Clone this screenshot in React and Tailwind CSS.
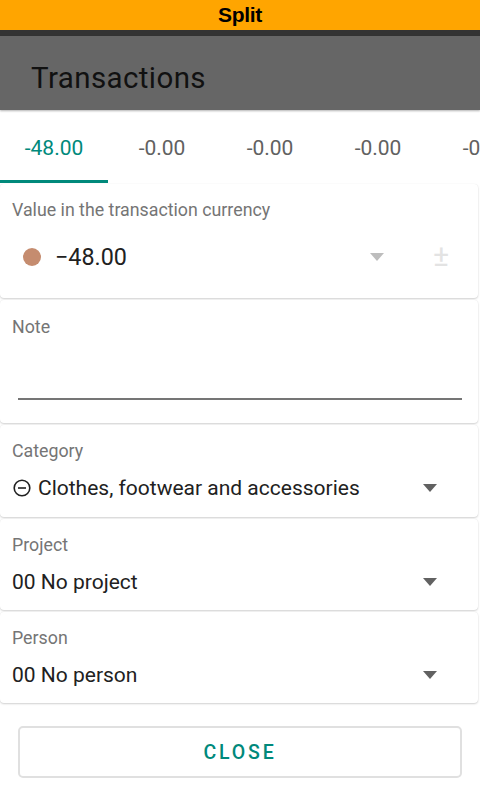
import React from "react";

const Arrow = ({ color = "#616161" }) => (
  <svg width="16" height="8" viewBox="0 0 16 8">
    <path d="M1 0 L15 0 L8 8 Z" fill={color} />
  </svg>
);

function Card({ children, className = "" }) {
  return (
    <div
      className={`bg-white rounded-[4px] shadow-[0_1px_2px_rgba(0,0,0,0.18),0_0_1px_rgba(0,0,0,0.08)] ${className}`}
    >
      {children}
    </div>
  );
}

function SelectCard({ label, value, icon, h }) {
  return (
    <Card className={`${h} px-[12px] pt-[16px]`}>
      <div className="text-[17.8px] leading-[20px] text-[#757575]">{label}</div>
      <div className="mt-[12px] flex items-center h-[30px]">
        {icon}
        <div className="text-[21px] leading-[30px] text-[#212121] flex-1">{value}</div>
        <div className="w-[16px] mr-[28px] flex items-center">
          <Arrow />
        </div>
      </div>
    </Card>
  );
}

export default function App() {
  const tabs = ["-48.00", "-0.00", "-0.00", "-0.00", "-0.00"];
  return (
    <div
      className="w-[480px] h-[800px] bg-white overflow-hidden"
      style={{ fontFamily: "Roboto, 'Noto Sans', sans-serif" }}
    >
      <div
        className="h-[30px] bg-[#ffa500] flex items-center justify-center text-[21px] font-bold text-black tracking-[-0.3px]"
        style={{ fontFamily: "'Liberation Sans', Arial, sans-serif" }}
      >
        Split
      </div>
      <div className="h-[6px] bg-[#333333]" />
      <div className="h-[74px] bg-[#666666] flex items-center pl-[31px] shadow-[0_1px_2px_rgba(0,0,0,0.3)] relative">
        <span className="text-[29.5px] text-[#111111] tracking-[0.4px] mt-[10px]">Transactions</span>
      </div>
      <div className="h-[73px] flex overflow-hidden">
        {tabs.map((t, i) => (
          <div
            key={i}
            className={`w-[108px] shrink-0 flex flex-col ${i === 0 ? "text-[#00897b]" : "text-[#616161]"}`}
          >
            <div className="flex-1 flex items-center justify-center text-[21px] pt-[8px] whitespace-nowrap">
              {t}
            </div>
            <div className={`h-[3px] ${i === 0 ? "bg-[#00897b]" : "bg-transparent"}`} />
          </div>
        ))}
      </div>
      <div className="flex flex-col gap-[2px] pt-[1px] pr-[2px]">
        <Card className="h-[114px] px-[12px] pt-[16px]">
          <div className="text-[17.8px] leading-[20px] text-[#757575]">
            Value in the transaction currency
          </div>
          <div className="mt-[17px] h-[40px] flex items-center">
            <div className="w-[18px] h-[18px] rounded-full bg-[#c58c6f] ml-[11px]" />
            <div className="ml-[14px] text-[23.3px] text-[#212121] flex-1">−48.00</div>
            <div className="w-[16px] flex items-center mr-[48px]">
              <Arrow color="#bdbdbd" />
            </div>
            <div className="text-[30px] text-[#e3e3e3] mr-[17px] leading-none -mt-[2px]">±</div>
          </div>
        </Card>
        <Card className="h-[123px] px-[18px] pt-[17px]">
          <div className="text-[17.8px] leading-[20px] text-[#757575] -ml-[6px]">Note</div>
          <div className="mt-[61px] h-[2px] bg-[#757575] w-[444px]" />
        </Card>
        <SelectCard
          h="h-[92px]"
          label="Category"
          value="Clothes, footwear and accessories"
          icon={
            <svg width="18" height="18" viewBox="0 0 18 18" className="mr-[7px] ml-[1px]">
              <circle cx="9" cy="9" r="7.8" fill="none" stroke="#212121" strokeWidth="1.6" />
              <line x1="5" y1="9" x2="13" y2="9" stroke="#212121" strokeWidth="1.6" />
            </svg>
          }
        />
        <SelectCard h="h-[91px]" label="Project" value="00 No project" />
        <SelectCard h="h-[91px]" label="Person" value="00 No person" />
      </div>
      <div className="mt-[23px] mx-[18px] h-[52px] border-2 border-[#e0e0e0] rounded-[5px] flex items-center justify-center text-[19.5px] font-medium tracking-[2.8px] text-[#00897b] pt-[1px]">
        CLOSE
      </div>
    </div>
  );
}
